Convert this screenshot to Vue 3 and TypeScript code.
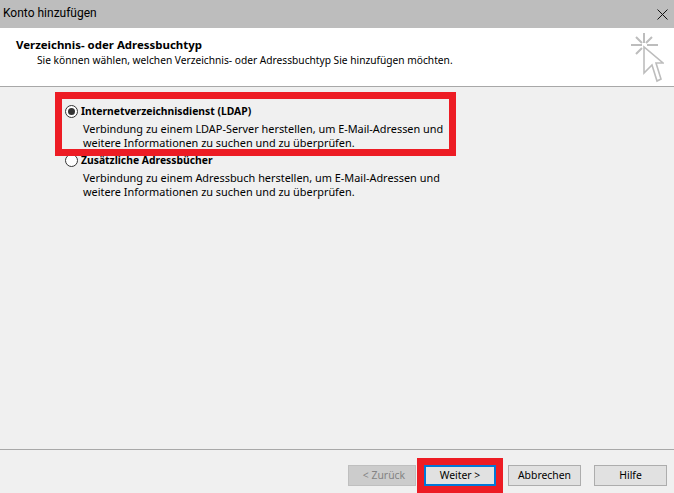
<script setup lang="ts">
interface Option {
  title: string;
  lines: string[];
  checked: boolean;
}
const options: Option[] = [
  {
    title: "Internetverzeichnisdienst (LDAP)",
    lines: [
      "Verbindung zu einem LDAP-Server herstellen, um E-Mail-Adressen und",
      "weitere Informationen zu suchen und zu überprüfen.",
    ],
    checked: true,
  },
  {
    title: "Zusätzliche Adressbücher",
    lines: [
      "Verbindung zu einem Adressbuch herstellen, um E-Mail-Adressen und",
      "weitere Informationen zu suchen und zu überprüfen.",
    ],
    checked: false,
  },
];
</script>

<template>
  <div class="dialog">
    <div class="titlebar">
      <span class="title">Konto hinzufügen</span>
      <svg class="close" width="11" height="11" viewBox="0 0 11 11">
        <path d="M0.5 0.5 L10.5 10.5 M10.5 0.5 L0.5 10.5" stroke="#111" stroke-width="1" fill="none" />
      </svg>
    </div>
    <div class="head">
      <div class="head-text">
        <div class="head-title">Verzeichnis- oder Adressbuchtyp</div>
        <div class="head-sub">Sie können wählen, welchen Verzeichnis- oder Adressbuchtyp Sie hinzufügen möchten.</div>
      </div>
      <svg class="wizard" width="36" height="54" viewBox="0 0 36 54" fill="none" stroke="#bdbdbd" stroke-width="2">
        <path d="M16 3 V13 M3 15 H14 M19 15 H30 M8 7 L14 13 M24 7 L18 13 M8 24 L14 18" />
        <path d="M16 17 L16 43 L24 35 L29 51 L33 49 L28 33 L35 33 Z" stroke-width="1.6" fill="#fff" />
      </svg>
    </div>
    <div class="content">
      <div class="options">
        <div v-for="o in options" :key="o.title" class="option">
          <div class="option-head">
            <span class="radio" :class="{ on: o.checked }"></span>
            <span class="option-title">{{ o.title }}</span>
          </div>
          <div class="option-desc">
            <div v-for="l in o.lines" :key="l">{{ l }}</div>
          </div>
        </div>
        <div class="mark mark-option"></div>
      </div>
    </div>
    <div class="footer">
      <button class="btn disabled" disabled>&lt; Zurück</button>
      <span class="next-wrap">
        <button class="btn primary">Weiter &gt;</button>
      </span>
      <button class="btn">Abbrechen</button>
      <button class="btn last">Hilfe</button>
    </div>
  </div>
</template>

<style>
html, body { margin: 0; padding: 0; }
</style>

<style scoped>
.dialog {
  width: 674px;
  height: 493px;
  display: flex;
  flex-direction: column;
  overflow: hidden;
  background: #f0f0f0;
  font-family: "Noto Sans", "Open Sans", sans-serif;
  font-size: 11px;
  color: #000;
}
.titlebar {
  height: 28px;
  flex: none;
  box-sizing: border-box;
  display: flex;
  align-items: center;
  justify-content: space-between;
  background: #bdbdbd;
  padding: 0 6px 2px 3px;
  font-family: Roboto, sans-serif;
  font-size: 12px;
}
.close { display: block; margin-top: 2px; }
.head {
  height: 58px;
  flex: none;
  box-sizing: border-box;
  background: #fff;
  display: flex;
  justify-content: space-between;
  padding: 0 10px 0 16px;
}
.head-text { padding-top: 9px; }
.head-title { font-weight: 700; line-height: 16px; font-size: 11.45px; }
.head-sub {
  padding-left: 21px;
  line-height: 15px;
  font-size: 10.2px;
}
.wizard { margin-top: 2px; }
.content {
  flex: 1;
  border-top: 1px solid #a8a8a8;
  border-bottom: 1px solid #a8a8a8;
  padding: 15px 0 0 65px;
}
.options { position: relative; width: 390px; }
.option { height: 49px; }
.option-head { display: flex; align-items: center; height: 18px; gap: 3px; }
.radio {
  flex: none;
  width: 13px;
  height: 13px;
  box-sizing: border-box;
  border: 1px solid #333;
  border-radius: 50%;
  background: #fff;
  display: flex;
  align-items: center;
  justify-content: center;
}
.radio.on::after {
  content: "";
  width: 7px;
  height: 7px;
  border-radius: 50%;
  background: #333;
}
.option-title { font-weight: 700; font-size: 10.35px; }
.option-desc { padding: 2px 0 0 18px; line-height: 14px; font-size: 10.9px; }
.mark {
  position: absolute;
  box-sizing: border-box;
  border: 7px solid #ed1c24;
  pointer-events: none;
}
.mark-option { left: -10px; top: -10px; width: 401px; height: 64px; }
.footer {
  height: 43px;
  flex: none;
  box-sizing: border-box;
  display: flex;
  align-items: flex-start;
  padding: 15px 7px 0 348px;
}
.btn {
  flex: none;
  width: 73px;
  height: 21px;
  box-sizing: border-box;
  border: 1px solid #adadad;
  background: #e1e1e1;
  font: inherit;
  font-size: 10.4px;
  color: #000;
  padding: 0;
  line-height: 17px;
}
.btn.last { margin-left: 13px; }
.btn.disabled {
  width: 68px;
  padding-left: 4px;
  background: #ccc;
  border-color: #bfbfbf;
  color: #838383;
}
.next-wrap {
  display: block;
  flex: none;
  margin: -7px 5px 0 1px;
  border: 7px solid #ed1c24;
  height: 35px;
  box-sizing: border-box;
}
.btn.primary {
  display: block;
  width: 72px;
  margin: 0;
  border: 2px solid #0078d7;
  line-height: 15px;
}
</style>
